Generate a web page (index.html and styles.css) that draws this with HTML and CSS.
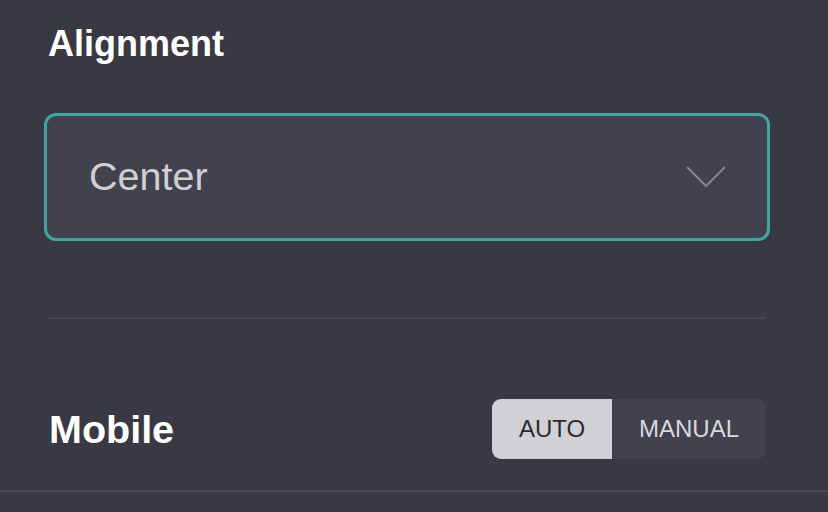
FILE: index.html
```html
<!DOCTYPE html>
<html lang="en">
<head>
<meta charset="utf-8">
<title>Settings</title>
<link rel="stylesheet" href="styles.css">
</head>
<body>
<div class="panel">
  <section class="section">
    <h2 class="heading">Alignment</h2>
    <div class="select">
      <span class="select-value">Center</span>
      <svg class="chevron" width="40" height="22" viewBox="0 0 40 22" aria-hidden="true">
        <path d="M1 1 L20 20 L39 1" fill="none" stroke="#85858e" stroke-width="2"/>
      </svg>
    </div>
    <hr class="divider">
  </section>
  <div class="row-wrap">
    <div class="row">
      <h2 class="heading heading-lg">Mobile</h2>
      <div class="toggle">
        <span class="seg seg-active">AUTO</span>
        <span class="seg seg-manual">MANUAL</span>
      </div>
    </div>
  </div>
</div>
</body>
</html>
```

FILE: styles.css
```css
* { box-sizing: border-box; }
html, body {
  margin: 0;
  padding: 0;
  background: #393944;
  font-family: "Liberation Sans", Arial, Helvetica, sans-serif;
  width: 828px;
  height: 512px;
  overflow: hidden;
}
.panel { display: flex; flex-direction: column; }
.section { padding: 26px 62px 0 48px; }
.heading {
  margin: 0;
  font-size: 36px;
  line-height: 35px;
  font-weight: 700;
  color: #ffffff;
}
.heading-lg { font-size: 39.5px; line-height: 39px; }
.select {
  margin: 52px -4px 0 -4px;
  height: 128px;
  border: 3px solid #3fa7a0;
  border-radius: 12px;
  background: #42424e;
  display: flex;
  align-items: center;
  justify-content: space-between;
  padding: 0 41px 0 42px;
}
.select-value {
  font-size: 39.5px;
  color: #cfcfd4;
  line-height: 1;
}
.chevron { display: block; }
.divider {
  margin: 76px 0 0 0;
  border: 0;
  height: 2px;
  background: #474753;
}
.row-wrap { border-bottom: 2px solid #474753; }
.row {
  display: flex;
  align-items: center;
  justify-content: space-between;
  padding: 80px 62px 31px 49px;
}
.toggle {
  display: flex;
  height: 60px;
  border-radius: 9px;
  overflow: hidden;
  background: #42424e;
}
.seg {
  display: flex;
  align-items: center;
  justify-content: center;
  font-size: 24px;
  color: #d9d9de;
}
.seg-active {
  width: 120px;
  background: #d1d1d5;
  color: #2b2b33;
}
.seg-manual { width: 154px; }
```
